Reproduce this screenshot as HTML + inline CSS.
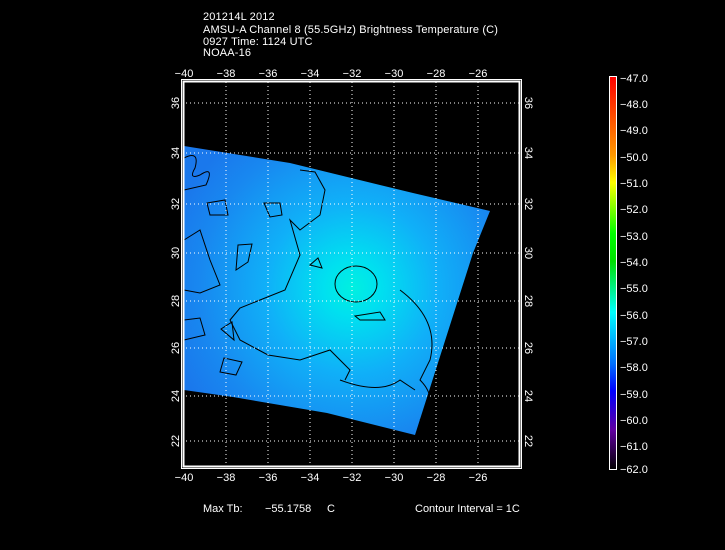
<!DOCTYPE html>
<html><head><meta charset="utf-8"><style>
html,body{margin:0;padding:0;background:#000;}
svg{display:block}
text{font-family:"Liberation Sans",sans-serif;font-size:11px;fill:#fff}
</style></head><body>
<svg width="725" height="550" viewBox="0 0 725 550" xmlns="http://www.w3.org/2000/svg">
<defs>
<radialGradient id="g1" cx="352" cy="288" r="190" gradientUnits="userSpaceOnUse">
<stop offset="0" stop-color="#00f0e0"/>
<stop offset="0.15" stop-color="#00e0f0"/>
<stop offset="0.45" stop-color="#10b0f8"/>
<stop offset="0.8" stop-color="#1888f0"/>
<stop offset="1" stop-color="#1a78ec"/>
</radialGradient>
<linearGradient id="cb" x1="0" y1="0" x2="0" y2="1">
<stop offset="0" stop-color="#ff0000"/>
<stop offset="0.2" stop-color="#ff9900"/>
<stop offset="0.27" stop-color="#ffff00"/>
<stop offset="0.4" stop-color="#00ff00"/>
<stop offset="0.47" stop-color="#00e000"/>
<stop offset="0.6" stop-color="#00ffff"/>
<stop offset="0.73" stop-color="#0070ff"/>
<stop offset="0.8" stop-color="#0000ff"/>
<stop offset="0.9" stop-color="#6000a0"/>
<stop offset="1" stop-color="#000000"/>
</linearGradient>
</defs>
<g style="letter-spacing:0.15px">
<text x="203" y="20">201214L 2012</text>
<text x="203" y="33">AMSU-A Channel 8 (55.5GHz) Brightness Temperature (C)</text>
<text x="203" y="45">0927 Time: 1124 UTC</text>
<text x="203" y="56">NOAA-16</text>
</g>

<path d="M184,146 L290,163 L413,193 L490,211 L473,253 L415,435 L327,413 L233,397 L184,390 Z" fill="url(#g1)"/>
<g fill="none" stroke="#000" stroke-width="1">
<ellipse cx="356" cy="284" rx="21" ry="18"/>
<path d="M184,158 Q200,150 195,168 Q188,180 200,175 Q215,165 206,185 L184,190"/>
<path d="M207,203 L225,200 L228,215 L210,215 Z"/>
<path d="M264,203 L280,203 L282,215 L270,217 Z"/>
<path d="M238,245 L252,244 L248,262 L236,270 Z"/>
<path d="M300,170 L315,172 L325,190 L320,215 L300,230 L290,220 L300,255 L285,290 L260,300 L240,308 L230,320 L240,340 L268,355 L300,360 L330,350 L350,370 L345,380"/>
<path d="M184,240 L200,230 L210,260 L220,285 L200,293 L184,290"/>
<path d="M184,320 L200,318 L205,335 L184,340"/>
<path d="M221,329 L232,322 L234,340 Z"/>
<path d="M224,358 L242,362 L236,375 L220,372 Z"/>
<path d="M310,265 L318,258 L322,268 Z"/>
<path d="M355,316 L380,312 L385,320 L360,320 Z"/>
<path d="M400,290 Q440,320 430,360 L420,380 Q440,400 420,420"/>
<path d="M340,380 Q380,395 400,380 L415,390"/>
</g>
<g stroke="#fff" stroke-width="1" stroke-dasharray="1,3" fill="none">
<path d="M226,82V465M268,82V465M310,82V465M352,82V465M394,82V465M436,82V465M478,82V465"/>
<path d="M186,103H519M186,153H519M186,204H519M186,253H519M186,301H519M186,348H519M186,396H519M186,441H519"/>
</g>
<rect x="181.5" y="79.5" width="340" height="389" fill="none" stroke="#fff"/>
<rect x="183.5" y="81.5" width="336" height="385" fill="none" stroke="#fff" stroke-width="2"/>
<g text-anchor="middle">
<text x="184" y="77">−40</text><text x="226" y="77">−38</text><text x="268" y="77">−36</text><text x="310" y="77">−34</text><text x="352" y="77">−32</text><text x="394" y="77">−30</text><text x="436" y="77">−28</text><text x="478" y="77">−26</text>
<text x="184" y="481">−40</text><text x="226" y="481">−38</text><text x="268" y="481">−36</text><text x="310" y="481">−34</text><text x="352" y="481">−32</text><text x="394" y="481">−30</text><text x="436" y="481">−28</text><text x="478" y="481">−26</text>
</g>
<g text-anchor="middle">
<text transform="translate(179,103) rotate(-90)">36</text>
<text transform="translate(179,153) rotate(-90)">34</text>
<text transform="translate(179,204) rotate(-90)">32</text>
<text transform="translate(179,253) rotate(-90)">30</text>
<text transform="translate(179,301) rotate(-90)">28</text>
<text transform="translate(179,348) rotate(-90)">26</text>
<text transform="translate(179,396) rotate(-90)">24</text>
<text transform="translate(179,441) rotate(-90)">22</text>
<text transform="translate(525,103) rotate(90)">36</text>
<text transform="translate(525,153) rotate(90)">34</text>
<text transform="translate(525,204) rotate(90)">32</text>
<text transform="translate(525,253) rotate(90)">30</text>
<text transform="translate(525,301) rotate(90)">28</text>
<text transform="translate(525,348) rotate(90)">26</text>
<text transform="translate(525,396) rotate(90)">24</text>
<text transform="translate(525,441) rotate(90)">22</text>
</g>
<rect x="609.5" y="76.5" width="7" height="393" fill="url(#cb)" stroke="#fff"/>
<g>
<text x="620" y="82">−47.0</text><text x="620" y="108">−48.0</text><text x="620" y="134">−49.0</text><text x="620" y="161">−50.0</text><text x="620" y="187">−51.0</text><text x="620" y="213">−52.0</text><text x="620" y="240">−53.0</text><text x="620" y="266">−54.0</text><text x="620" y="292">−55.0</text><text x="620" y="319">−56.0</text><text x="620" y="345">−57.0</text><text x="620" y="371">−58.0</text><text x="620" y="398">−59.0</text><text x="620" y="424">−60.0</text><text x="620" y="450">−61.0</text><text x="620" y="473">−62.0</text>
</g>
<text x="203" y="512">Max Tb:</text>
<text x="265" y="512">−55.1758</text>
<text x="327" y="512">C</text>
<text x="415" y="512">Contour Interval = 1C</text>
</svg>
</body></html>
